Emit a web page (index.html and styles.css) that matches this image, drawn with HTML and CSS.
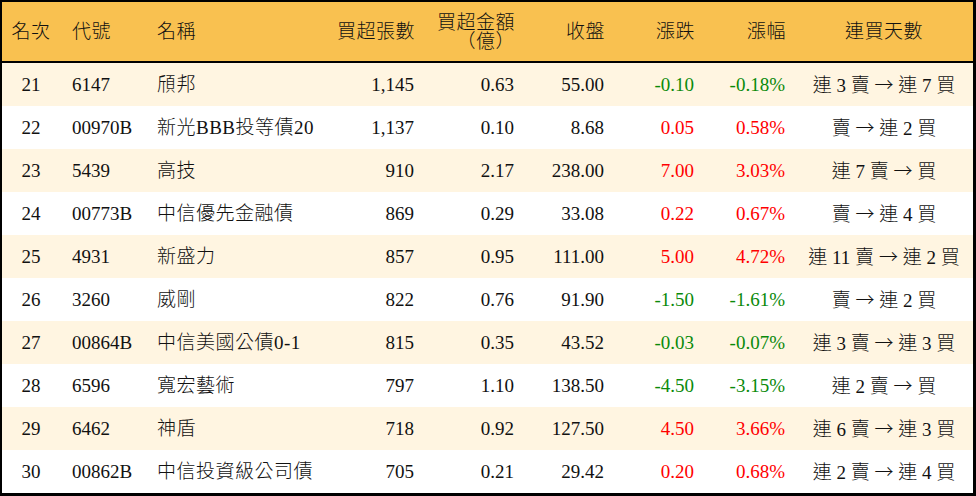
FILE: index.html
```html
<!DOCTYPE html>
<html lang="zh-Hant">
<head>
<meta charset="utf-8">
<link rel="stylesheet" href="styles.css">
</head>
<body>
<div class="board">
  <div class="row head">
    <div class="c rank">名次</div>
    <div class="c code">代號</div>
    <div class="c name">名稱</div>
    <div class="c num">買超張數</div>
    <div class="c num two"><span>買超金額</span><span>（億）</span></div>
    <div class="c num">收盤</div>
    <div class="c num">漲跌</div>
    <div class="c num">漲幅</div>
    <div class="c days">連買天數</div>
  </div>
  <div class="row odd">
    <div class="c rank">21</div><div class="c code">6147</div><div class="c name">頎邦</div>
    <div class="c num">1,145</div><div class="c num">0.63</div><div class="c num">55.00</div>
    <div class="c num down">-0.10</div><div class="c num down">-0.18%</div><div class="c days">連 3 賣 <span class="arr">→</span> 連 7 買</div>
  </div>
  <div class="row">
    <div class="c rank">22</div><div class="c code">00970B</div><div class="c name">新光BBB投等債20</div>
    <div class="c num">1,137</div><div class="c num">0.10</div><div class="c num">8.68</div>
    <div class="c num up">0.05</div><div class="c num up">0.58%</div><div class="c days">賣 <span class="arr">→</span> 連 2 買</div>
  </div>
  <div class="row odd">
    <div class="c rank">23</div><div class="c code">5439</div><div class="c name">高技</div>
    <div class="c num">910</div><div class="c num">2.17</div><div class="c num">238.00</div>
    <div class="c num up">7.00</div><div class="c num up">3.03%</div><div class="c days">連 7 賣 <span class="arr">→</span> 買</div>
  </div>
  <div class="row">
    <div class="c rank">24</div><div class="c code">00773B</div><div class="c name">中信優先金融債</div>
    <div class="c num">869</div><div class="c num">0.29</div><div class="c num">33.08</div>
    <div class="c num up">0.22</div><div class="c num up">0.67%</div><div class="c days">賣 <span class="arr">→</span> 連 4 買</div>
  </div>
  <div class="row odd">
    <div class="c rank">25</div><div class="c code">4931</div><div class="c name">新盛力</div>
    <div class="c num">857</div><div class="c num">0.95</div><div class="c num">111.00</div>
    <div class="c num up">5.00</div><div class="c num up">4.72%</div><div class="c days">連 11 賣 <span class="arr">→</span> 連 2 買</div>
  </div>
  <div class="row">
    <div class="c rank">26</div><div class="c code">3260</div><div class="c name">威剛</div>
    <div class="c num">822</div><div class="c num">0.76</div><div class="c num">91.90</div>
    <div class="c num down">-1.50</div><div class="c num down">-1.61%</div><div class="c days">賣 <span class="arr">→</span> 連 2 買</div>
  </div>
  <div class="row odd">
    <div class="c rank">27</div><div class="c code">00864B</div><div class="c name">中信美國公債0-1</div>
    <div class="c num">815</div><div class="c num">0.35</div><div class="c num">43.52</div>
    <div class="c num down">-0.03</div><div class="c num down">-0.07%</div><div class="c days">連 3 賣 <span class="arr">→</span> 連 3 買</div>
  </div>
  <div class="row">
    <div class="c rank">28</div><div class="c code">6596</div><div class="c name">寬宏藝術</div>
    <div class="c num">797</div><div class="c num">1.10</div><div class="c num">138.50</div>
    <div class="c num down">-4.50</div><div class="c num down">-3.15%</div><div class="c days">連 2 賣 <span class="arr">→</span> 買</div>
  </div>
  <div class="row odd">
    <div class="c rank">29</div><div class="c code">6462</div><div class="c name">神盾</div>
    <div class="c num">718</div><div class="c num">0.92</div><div class="c num">127.50</div>
    <div class="c num up">4.50</div><div class="c num up">3.66%</div><div class="c days">連 6 賣 <span class="arr">→</span> 連 3 買</div>
  </div>
  <div class="row">
    <div class="c rank">30</div><div class="c code">00862B</div><div class="c name">中信投資級公司債</div>
    <div class="c num">705</div><div class="c num">0.21</div><div class="c num">29.42</div>
    <div class="c num up">0.20</div><div class="c num up">0.68%</div><div class="c days">連 2 賣 <span class="arr">→</span> 連 4 買</div>
  </div>
</div>
</body>
</html>
```

FILE: styles.css
```css
html, body {
  margin: 0;
  padding: 0;
  background: #ffffff;
}
.board {
  width: 976px;
  height: 496px;
  box-sizing: border-box;
  border-style: solid;
  border-color: #000;
  border-width: 2px 3px 3px 2px;
  font-family: "Liberation Serif", "Noto Sans CJK TC", serif;
  font-size: 19px;
  font-weight: 300;
  color: #111;
  display: flex;
  flex-direction: column;
}
.row {
  display: grid;
  grid-template-columns: 58px 85px 185px 94px 100px 90px 90px 91px 178px;
  height: 43px;
  align-items: center;
  background: #ffffff;
}
.row.odd {
  background: #fff5e1;
}
.row.head {
  height: 59px;
  background: #f9c150;
  border-bottom: 2px solid #000;
}
.row.head .c {
  letter-spacing: 0.5px;
}
.row.head .num {
  padding-right: 9px;
}
.c {
  white-space: nowrap;
  line-height: 20px;
}
.rank {
  text-align: center;
}
.code {
  padding-left: 12px;
}
.name {
  padding-left: 12px;
  letter-spacing: 0.5px;
}
.num {
  text-align: right;
  padding-right: 10px;
}
.days {
  text-align: center;
}
.arr {
  font-family: "Noto Sans CJK TC", sans-serif;
  font-weight: 300;
}
.two {
  display: flex;
  flex-direction: column;
  align-items: flex-end;
  line-height: 19px;
}
.up {
  color: #ff0000;
}
.down {
  color: #0a8a0a;
}
```
